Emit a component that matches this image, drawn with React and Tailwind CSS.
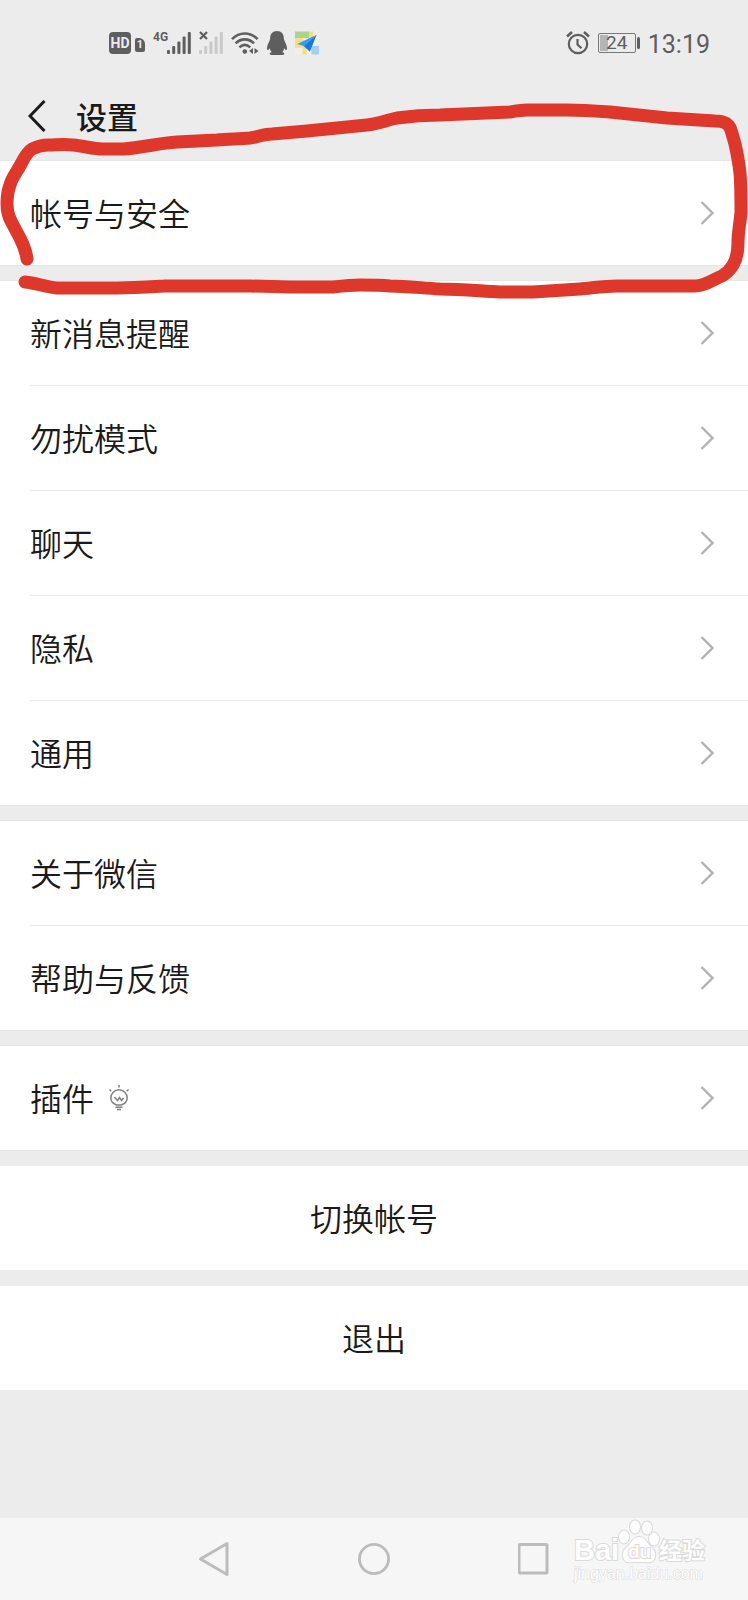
// App.jsx
import React from "react";

const groups = [
  ["帐号与安全"],
  ["新消息提醒", "勿扰模式", "聊天", "隐私", "通用"],
  ["关于微信", "帮助与反馈"],
  ["插件"],
];

const actions = ["切换帐号", "退出"];

const Signal = ({ className }) => (
  <svg viewBox="0 0 24 24" className={`h-6 w-6 ${className}`} fill="currentColor">
    <rect x="0" y="19" width="3" height="4" rx="1" />
    <rect x="5.2" y="15" width="3" height="8" rx="1" />
    <rect x="10.4" y="10.5" width="3" height="12.5" rx="1" />
    <rect x="15.6" y="5.5" width="3" height="17.5" rx="1" />
    <rect x="20.8" y="1" width="3" height="22" rx="1" />
  </svg>
);

const Wifi = () => (
  <svg viewBox="0 0 28 24" className="h-6 w-7" fill="none" stroke="currentColor" strokeWidth="2.6">
    <path d="M1 8.2C8.4 0.6 19.2 0.6 26.6 8.2" />
    <path d="M4.6 12.4C10 7 17.6 7 23 12.4" />
    <path d="M8.4 16.4C11.8 13.2 15.8 13.2 19.2 16.4" />
    <circle cx="13.8" cy="20.5" r="2.3" fill="currentColor" stroke="none" />
    <path d="M22 17v6l-4-3zM23.5 17v6l4-3z" fill="currentColor" stroke="none" />
  </svg>
);

const Penguin = () => (
  <svg viewBox="0 0 20 24" className="h-6 w-5" fill="currentColor">
    <path d="M10 0C5.6 0 3.2 3 3.2 7c0 1.2-.3 2-.9 3.2C.9 12.8 0 15.4 0 17.6c0 1.6.8 1.9 1.7.9l1-1.3c.3 1.6 1 2.9 2 3.9-1.2.5-2 1.1-2 1.8 0 .8 1.5 1.1 3.6 1.1h7.4c2.1 0 3.6-.3 3.6-1.1 0-.7-.8-1.3-2-1.8 1-1 1.7-2.3 2-3.9l1 1.3c.9 1 1.7.7 1.7-.9 0-2.2-.9-4.8-2.3-7.400-.6-1.200-.9-2-.9-3.200 0-4-2.400-7-6.800-7z" />
  </svg>
);

const MapApp = () => (
  <svg viewBox="0 0 25 24" className="h-6 w-6">
    <rect width="25" height="24" rx="1" fill="#f1efe6" />
    <path d="M0 0h15v7H0z" fill="#a9d58b" />
    <path d="M15 0h4v9h-4zM0 7h8l4 7v10H8v-7H0z" fill="#f9dc7b" />
    <path d="M17 15h8v9h-8z" fill="#a8cdf5" />
    <path d="M22.5 3.5L2.5 13l6.5 2z" fill="#2f9bf5" />
    <path d="M22.5 3.5L9 15l6.5 6z" fill="#1479e0" />
  </svg>
);

const Alarm = () => (
  <svg viewBox="0 0 24 24" className="h-6 w-6" fill="none" stroke="currentColor" strokeWidth="2.2">
    <circle cx="12" cy="13" r="9.2" />
    <path d="M11.5 8v5.5l4 3.8" />
    <path d="M1 5.5L6 1M23 5.5L18 1" strokeWidth="2.6" />
  </svg>
);

const Bulb = () => (
  <svg viewBox="0 0 20 26" className="ml-[15px] h-[26px] w-5" fill="none" stroke="#808080" strokeWidth="1.5">
    <path d="M7.5 20C4 18.6 1.8 16 1.8 13a8.2 8.2 0 0 1 16.4 0c0 3-2.2 5.6-5.7 7z" />
    <path d="M5.5 12l3 3.5 2-3 2 3 2-2.5" />
    <path d="M6.5 22.2h7M8 24.5h4" />
    <path d="M10 0v2.5M.5 4.5l1.6 1.6M19.5 4.5l-1.6 1.6" />
  </svg>
);

const Chevron = () => (
  <svg viewBox="0 0 14 24" className="h-6 w-[14px]" fill="none" stroke="#b2b2b2" strokeWidth="2.4">
    <path d="M1.5 1L12.5 12L1.5 23" />
  </svg>
);

const StatusBar = () => (
  <div className="flex h-[76px] items-center justify-between pt-2.5 pl-[109px] pr-[38px] text-[#5e5e5e]">
    <div className="flex items-center">
      <span className="flex h-[22px] w-[22px] items-center justify-center rounded-sm bg-[#5e5e5e] text-[14px] font-bold text-[#ececec]">
        HD
      </span>
      <span className="ml-1 mt-1 flex h-[14px] w-[10px] items-center justify-center rounded-xs rounded-tr-md bg-[#5e5e5e] text-[11px] font-bold text-[#ececec]">
        1
      </span>
      <span className="ml-2 mb-3 w-[14px] text-[12px] leading-3 font-bold">4G</span>
      <Signal className="" />
      <div className="relative ml-2">
        <Signal className="text-[#c9c9c9]" />
        <svg viewBox="0 0 9 9" className="absolute top-0 left-0 h-[9px] w-[9px]" stroke="currentColor" strokeWidth="2.2">
          <path d="M1 1l7 7M8 1L1 8" />
        </svg>
      </div>
      <div className="ml-2 flex items-center gap-2">
        <Wifi />
        <Penguin />
        <MapApp />
      </div>
    </div>
    <div className="flex items-center gap-2">
      <Alarm />
      <div className="flex items-center gap-px">
        <span className="relative flex h-5 w-[38px] items-center justify-center rounded-xs border border-[#777777] text-[19px] leading-5">
          <span className="absolute top-px bottom-px left-px w-2 bg-[#b5b5b5]"></span>
          <span className="relative">24</span>
        </span>
        <span className="h-3 w-[3px] rounded-xs bg-[#5e5e5e]"></span>
      </div>
      <span className="pt-1 text-[25px] leading-7">13:19</span>
    </div>
  </div>
);

const Watermark = () => (
  <svg
    viewBox="0 0 140 70"
    className="absolute right-[38px] bottom-4 h-[70px] w-[140px] font-['Liberation_Sans','Noto_Sans_CJK_SC',sans-serif]"
    fill="#fdfdfd"
    stroke="#dadada"
    strokeWidth="2"
    paintOrder="stroke"
  >
    <text x="4" y="46" fontSize="29" fontWeight="700">Bai</text>
    <ellipse cx="54" cy="23" rx="5" ry="6.5" />
    <ellipse cx="65" cy="13" rx="5" ry="6.5" />
    <ellipse cx="77" cy="14" rx="5" ry="6.5" />
    <ellipse cx="84" cy="25" rx="5" ry="6.5" />
    <path d="M69 23c-6 0-7 5-11 9-4 3-6 7-5 11 1 5 6 6 10 5h12c4 1 9 0 10-5 1-4-1-8-5-11-4-4-5-9-11-9z" />
    <text x="58" y="44" fontSize="19" fontWeight="700">du</text>
    <text x="89" y="45" fontSize="23" fontWeight="700">经验</text>
    <text x="4" y="65" fontSize="16" strokeWidth="1">jingyan.baidu.com</text>
  </svg>
);

const NavBar = () => (
  <nav className="relative flex h-[82px] items-center justify-center gap-32 bg-[#f6f6f6]">
    <button aria-label="返回">
      <svg viewBox="0 0 32 36" className="h-9 w-8" fill="none" stroke="#bcbcbc" strokeWidth="3" strokeLinejoin="round">
        <path d="M29 2.5v31L2.5 18z" />
      </svg>
    </button>
    <button aria-label="主页">
      <svg viewBox="0 0 34 34" className="h-[34px] w-8" fill="none" stroke="#bcbcbc" strokeWidth="3">
        <circle cx="17" cy="17" r="15.5" />
      </svg>
    </button>
    <button aria-label="最近任务">
      <svg viewBox="0 0 32 32" className="h-8 w-8" fill="none" stroke="#bcbcbc" strokeWidth="3">
        <rect x="1" y="1.5" width="28" height="28.5" rx="1" />
      </svg>
    </button>
    <Watermark />
  </nav>
);

// hand-drawn circle round the first entry
const Marker = () => (
  <svg
    viewBox="0 0 748 300"
    className="pointer-events-none absolute top-0 left-0 w-full"
    fill="none"
    stroke="#de382d"
    strokeWidth="13"
    strokeLinecap="round"
    strokeLinejoin="round"
  >
    <path d="M27 259C26 251 23 244 20 238L12 223C8 216 7 211 7 204C7 197 8 190 10 185C12 177 17 172 21 164C24 158 27 152 32 149C38 146 42 145 48 145C56 145 64 144 73 145C84 146 93 149 103 149H123C141 148 159 143 177 142L217 140C228 139 240 139 250 138C258 137 264 134 272 134L307 131L367 125C378 124 387 120 397 118C411 116 425 115 440 115L510 112C516 111 521 110 527 110H567C581 110 596 111 610 112C629 114 648 116 667 118L715 121C725 121 729 124 731 130L735 144C737 153 739 163 740 173C741 184 741 196 741 212C740 225 738 231 738 243C738 254 736 260 733 265C730 270 727 273 722 276C714 279 705 286 695 286H617C605 286 592 288 580 289C564 290 549 291 533 292H500C480 291 460 289 440 289C422 288 405 286 390 286C380 285 370 285 360 285C351 285 342 286 333 287H290L250 286H165C148 287 133 288 117 288H57C46 287 36 283 25 282" />
  </svg>
);

const App = () => {
  return (
    <div className="relative flex min-h-screen flex-col bg-[#ececec] font-['Roboto','Noto_Sans_CJK_SC',sans-serif] text-[#1a1a1a]">
      <StatusBar />

      <header className="flex h-[85px] items-center gap-[30px] pb-1.5 pl-7">
        <button aria-label="返回">
          <svg viewBox="0 0 18 32" className="h-8 w-[18px]" fill="none" stroke="#1a1a1a" strokeWidth="3">
            <path d="M16.5 1L2 16L16.5 31" />
          </svg>
        </button>
        <h1 className="pt-1.5 text-[31px] leading-10 font-medium">设置</h1>
      </header>

      <main className="flex flex-col gap-4">
        {groups.map((items) => (
          <ul key={items[0]} className="bg-white shadow-[0_0_0_1px_#e6e6e6]">
            {items.map((item, i) => (
              <li key={item}>
                {i > 0 && <div className="ml-[30px] h-px bg-[#ebebeb]"></div>}
                <a href="#" className="flex h-[104px] items-center pr-[34px] pl-[30px]">
                  <span className="pt-1 text-[32px] leading-10 font-[350]">{item}</span>
                  {item === "插件" && <Bulb />}
                  <span className="ml-auto">
                    <Chevron />
                  </span>
                </a>
              </li>
            ))}
          </ul>
        ))}

        {actions.map((label) => (
          <button key={label} className="h-[104px] bg-white pt-1 text-[32px] leading-10 font-[350]">
            {label}
          </button>
        ))}
      </main>

      <div className="min-h-32 flex-1"></div>
      <NavBar />
      <Marker />
    </div>
  );
};

export default App;
